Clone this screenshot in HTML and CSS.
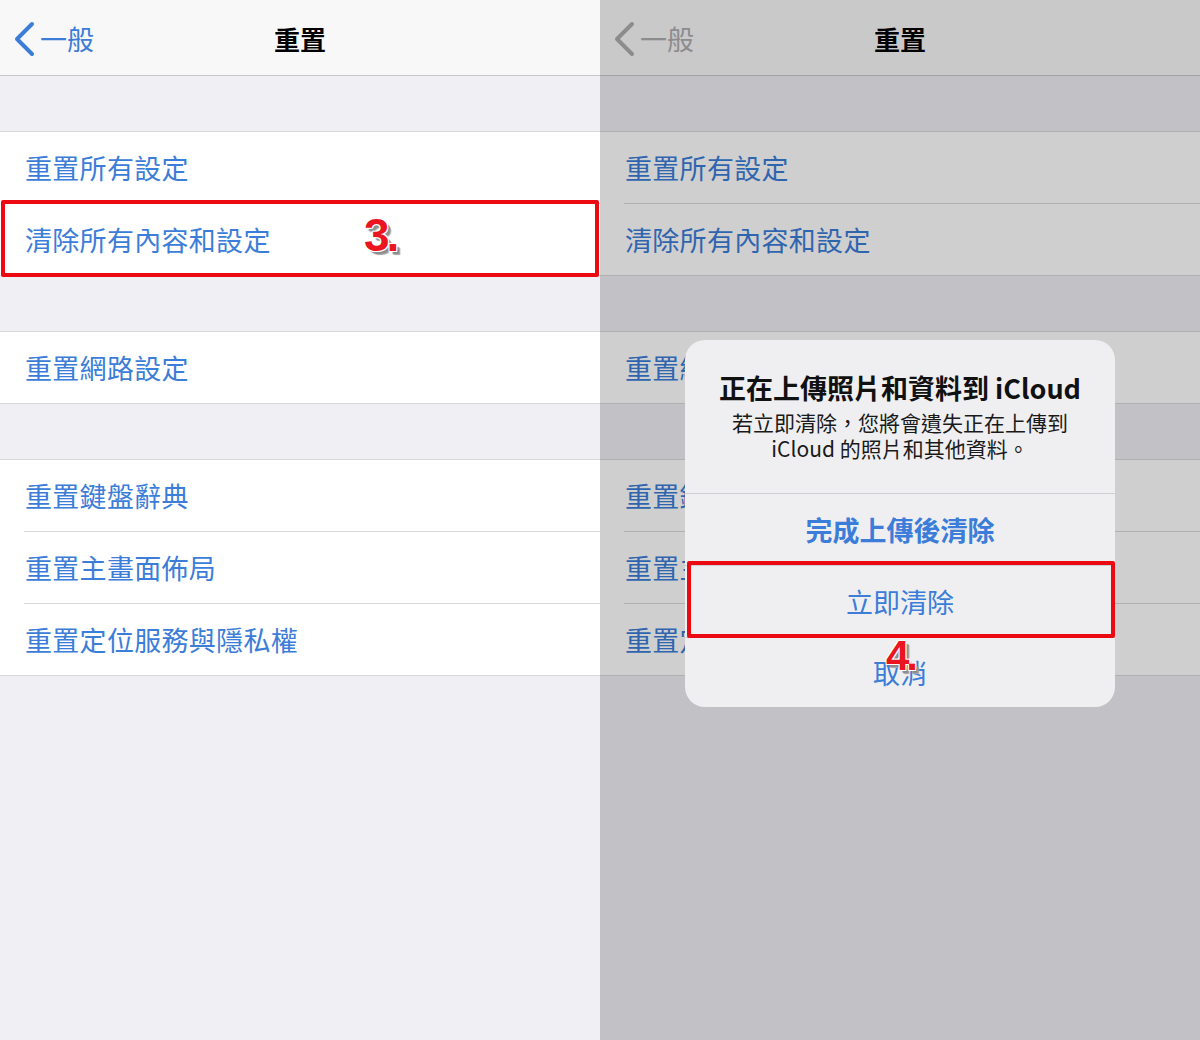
FILE: index.html
```html
<!DOCTYPE html>
<html lang="zh-Hant">
<head>
<meta charset="utf-8">
<title>重置</title>
<link rel="stylesheet" href="styles.css">
</head>
<body>
<div class="screens">
  <section class="panel">
    <header class="nav">
      <div class="back">
        <svg class="chev" width="22" height="36" viewBox="0 0 22 36"><path d="M19 3 L4 18 L19 33" fill="none" stroke="currentColor" stroke-width="4" stroke-linecap="round" stroke-linejoin="round"/></svg>
        <span>一般</span>
      </div>
      <h1 class="title">重置</h1>
    </header>
    <div class="group"><div class="row">重置所有設定</div><div class="row">清除所有內容和設定</div></div>
    <div class="group"><div class="row">重置網路設定</div></div>
    <div class="group"><div class="row">重置鍵盤辭典</div><div class="row">重置主畫面佈局</div><div class="row">重置定位服務與隱私權</div></div>
    <div class="mark mark-left"></div>
    <span class="step step3">3.</span>
  </section>

  <section class="panel dim">
    <header class="nav">
      <div class="back">
        <svg class="chev" width="22" height="36" viewBox="0 0 22 36"><path d="M19 3 L4 18 L19 33" fill="none" stroke="currentColor" stroke-width="4" stroke-linecap="round" stroke-linejoin="round"/></svg>
        <span>一般</span>
      </div>
      <h1 class="title">重置</h1>
    </header>
    <div class="group"><div class="row">重置所有設定</div><div class="row">清除所有內容和設定</div></div>
    <div class="group"><div class="row">重置網路設定</div></div>
    <div class="group"><div class="row">重置鍵盤辭典</div><div class="row">重置主畫面佈局</div><div class="row">重置定位服務與隱私權</div></div>
    <div class="shade"></div>
    <div class="alert">
      <div class="alert-head">
        <div class="alert-title">正在上傳照片和資料到 iCloud</div>
        <div class="alert-msg">若立即清除，您將會遺失正在上傳到<br>iCloud 的照片和其他資料。</div>
      </div>
      <div class="alert-btn strong">完成上傳後清除</div>
      <div class="alert-btn">立即清除</div>
      <div class="alert-btn">取消</div>
    </div>
    <div class="mark mark-right"></div>
    <span class="step step4">4.</span>
  </section>
</div>
</body>
</html>
```
FILE: styles.css
```css
* { box-sizing: border-box; margin: 0; padding: 0; }
html, body { width: 1200px; height: 1040px; overflow: hidden; }
body {
  font-family: "Noto Sans CJK TC", "Noto Sans", sans-serif;
  background: #efeff4;
}
.screens { display: flex; width: 1200px; height: 1040px; }
.panel {
  position: relative;
  width: 600px;
  height: 1040px;
  background: #efeff4;
  display: flex;
  flex-direction: column;
  gap: 55px;
}
.nav {
  position: relative;
  height: 76px;
  background: #f8f8f9;
  border-bottom: 1px solid #c8c7cc;
  display: flex;
  align-items: center;
  flex-shrink: 0;
}
.back {
  display: flex;
  align-items: center;
  gap: 5px;
  padding-left: 13px;
  color: #3b7dd8;
  font-size: 27px;
  line-height: 1;
  padding-top: 2px;
}
.chev { display: block; }
.title {
  position: absolute;
  left: 0; right: 0; top: 0;
  height: 75px;
  display: flex;
  align-items: center;
  justify-content: center;
  font-size: 26px;
  font-weight: 700;
  color: #000;
  padding-top: 2px;
}
.group {
  background: #fff;
  border-top: 1px solid #d8d8dc;
  border-bottom: 1px solid #d8d8dc;
  flex-shrink: 0;
}
.row {
  position: relative;
  height: 71px;
  display: flex;
  align-items: center;
  padding-left: 25px;
  font-size: 27px;
  color: #3b7dd8;
  letter-spacing: 0.3px;
}
.row + .row { height: 72px; border-top: 1px solid transparent; }
.row + .row::before {
  content: "";
  position: absolute;
  left: 24px; right: 0; top: -1px;
  height: 1px;
  background: #d8d8dc;
}
.dim .back { color: #adadb1; }
.shade {
  position: absolute;
  inset: 0;
  background: rgba(0, 0, 0, 0.19);
}
.mark {
  position: absolute;
  border: 4px solid #ec0a12;
  border-radius: 2px;
}
.mark-left { left: 1px; top: 200px; width: 598px; height: 77px; }
.mark-right { left: 87px; top: 561px; width: 428px; height: 77px; }
.step {
  position: absolute;
  font-family: "Liberation Sans", Arial, sans-serif;
  font-weight: 700;
  color: #ea1520;
  line-height: 1;
  letter-spacing: -3px;
  text-shadow:
    -1px -1px 0 #fff, 1px -1px 0 #fff, -1px 1px 0 #fff, 1px 1px 0 #fff,
    3px 3px 1px #8c8c8c, 4px 4px 1px #a8a8a8;
}
.step3 { left: 364px; top: 212px; font-size: 46px; }
.step4 { left: 286px; top: 635px; font-size: 42px; }
.alert {
  position: absolute;
  left: 85px;
  top: 340px;
  width: 430px;
  background: #efeff1;
  border-radius: 20px;
  overflow: hidden;
  display: flex;
  flex-direction: column;
  text-align: center;
}
.alert-head {
  padding: 33px 14px 32px;
  display: flex;
  flex-direction: column;
  gap: 6px;
}
.alert-title {
  font-size: 27px;
  line-height: 30px;
  font-weight: 600;
  color: #111;
  white-space: nowrap;
}
.alert-msg {
  font-size: 21px;
  line-height: 26px;
  color: #1a1a1a;
}
.alert-btn {
  height: 72px;
  border-top: 1px solid #cfcfd3;
  display: flex;
  align-items: center;
  justify-content: center;
  font-size: 27px;
  color: #3b7dd8;
}
.alert-btn:last-child { height: 70px; }
.alert-btn.strong { font-weight: 600; }
```
